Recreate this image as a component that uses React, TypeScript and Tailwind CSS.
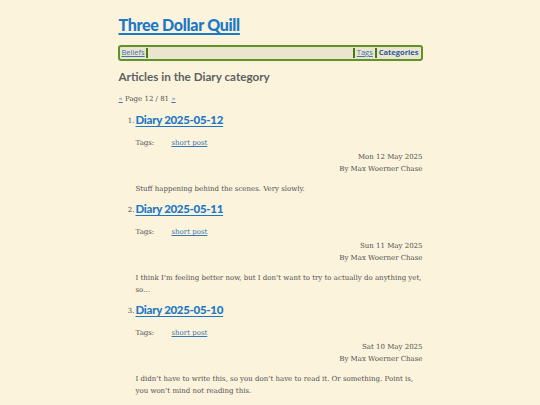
import React from "react";

const sans = { fontFamily: 'Lato, "Open Sans", sans-serif' };
const navFont = { fontFamily: '"Open Sans", "Noto Sans", sans-serif' };
const serif = { fontFamily: '"DejaVu Serif", "Liberation Serif", serif' };

const posts = [
  {
    n: 1,
    title: "Diary 2025-05-12",
    date: "Mon 12 May 2025",
    summary: "Stuff happening behind the scenes. Very slowly.",
  },
  {
    n: 2,
    title: "Diary 2025-05-11",
    date: "Sun 11 May 2025",
    summary:
      "I think I\u2019m feeling better now, but I don\u2019t want to try to actually do anything yet, so\u2026",
  },
  {
    n: 3,
    title: "Diary 2025-05-10",
    date: "Sat 10 May 2025",
    summary:
      "I didn\u2019t have to write this, so you don\u2019t have to read it. Or something. Point is, you won\u2019t mind not reading this.",
  },
];

export default function App() {
  return (
    <div className="min-h-[405px] w-full bg-[#fbf3dc] text-[#505050]">
      <div className="mx-auto w-[305px] pt-[13px] pl-px">
        <h1 className="text-[16px] font-[900] leading-[24px] tracking-[-0.3px]" style={sans}>
          <a className="text-[#1b78c8] underline decoration-[1.5px] underline-offset-2" href="#">
            Three Dollar Quill
          </a>
        </h1>
        <nav
          className="mt-[8px] -ml-px flex h-[16px] items-center rounded-[3px] border-2 border-[#5f9323] bg-[#ebe4cf] px-[2px] text-[7.5px] leading-none"
          style={navFont}
        >
          <a className="pr-[1px] text-[#3a76b0] underline" href="#">Beliefs</a>
          <span className="h-[10px] w-[2px] bg-[#4b7a14]" />
          <span className="flex-1" />
          <span className="h-[10px] w-[2px] bg-[#4b7a14]" />
          <a className="px-[2px] text-[#3a76b0] underline" href="#">Tags</a>
          <span className="h-[10px] w-[2px] bg-[#4b7a14]" />
          <a className="pl-[2px] font-bold text-[#2a5f9a]" href="#">Categories</a>
        </nav>
        <h2 className="mt-[7px] text-[11.7px] font-bold leading-[16px] text-[#5b6260]" style={sans}>
          Articles in the Diary category
        </h2>
        <p className="mt-[10px] text-[7px] leading-[10px]" style={serif}>
          <a className="text-[#3a76b0] underline" href="#">«</a> Page 12 / 81{" "}
          <a className="text-[#3a76b0] underline" href="#">»</a>
        </p>
        <ol className="mt-[7px]">
          {posts.map((p) => (
            <li key={p.n} className="flex pb-[5px]">
              <span className="w-[16px] shrink-0 pt-[5px] text-right text-[7px] leading-[10px]" style={serif}>
                {p.n}.
              </span>
              <div className="ml-px flex-1">
                <h3 className="text-[11.5px] font-[900] leading-[18px] tracking-[-0.3px]" style={sans}>
                  <a className="text-[#1b78c8] underline decoration-[1px] underline-offset-2" href="#">
                    {p.title}
                  </a>
                </h3>
                <div className="mt-[9px] flex text-[7px] leading-[10px]" style={serif}>
                  <span className="w-[36px]">Tags:</span>
                  <a className="text-[#3a76b0] underline" href="#">short post</a>
                </div>
                <div className="mt-[3px] text-right text-[7px] leading-[12px]" style={serif}>
                  <div>{p.date}</div>
                  <div>By Max Woerner Chase</div>
                </div>
                <p className="mt-[8px] text-[7px] leading-[12px]" style={serif}>
                  {p.summary}
                </p>
              </div>
            </li>
          ))}
        </ol>
      </div>
    </div>
  );
}
